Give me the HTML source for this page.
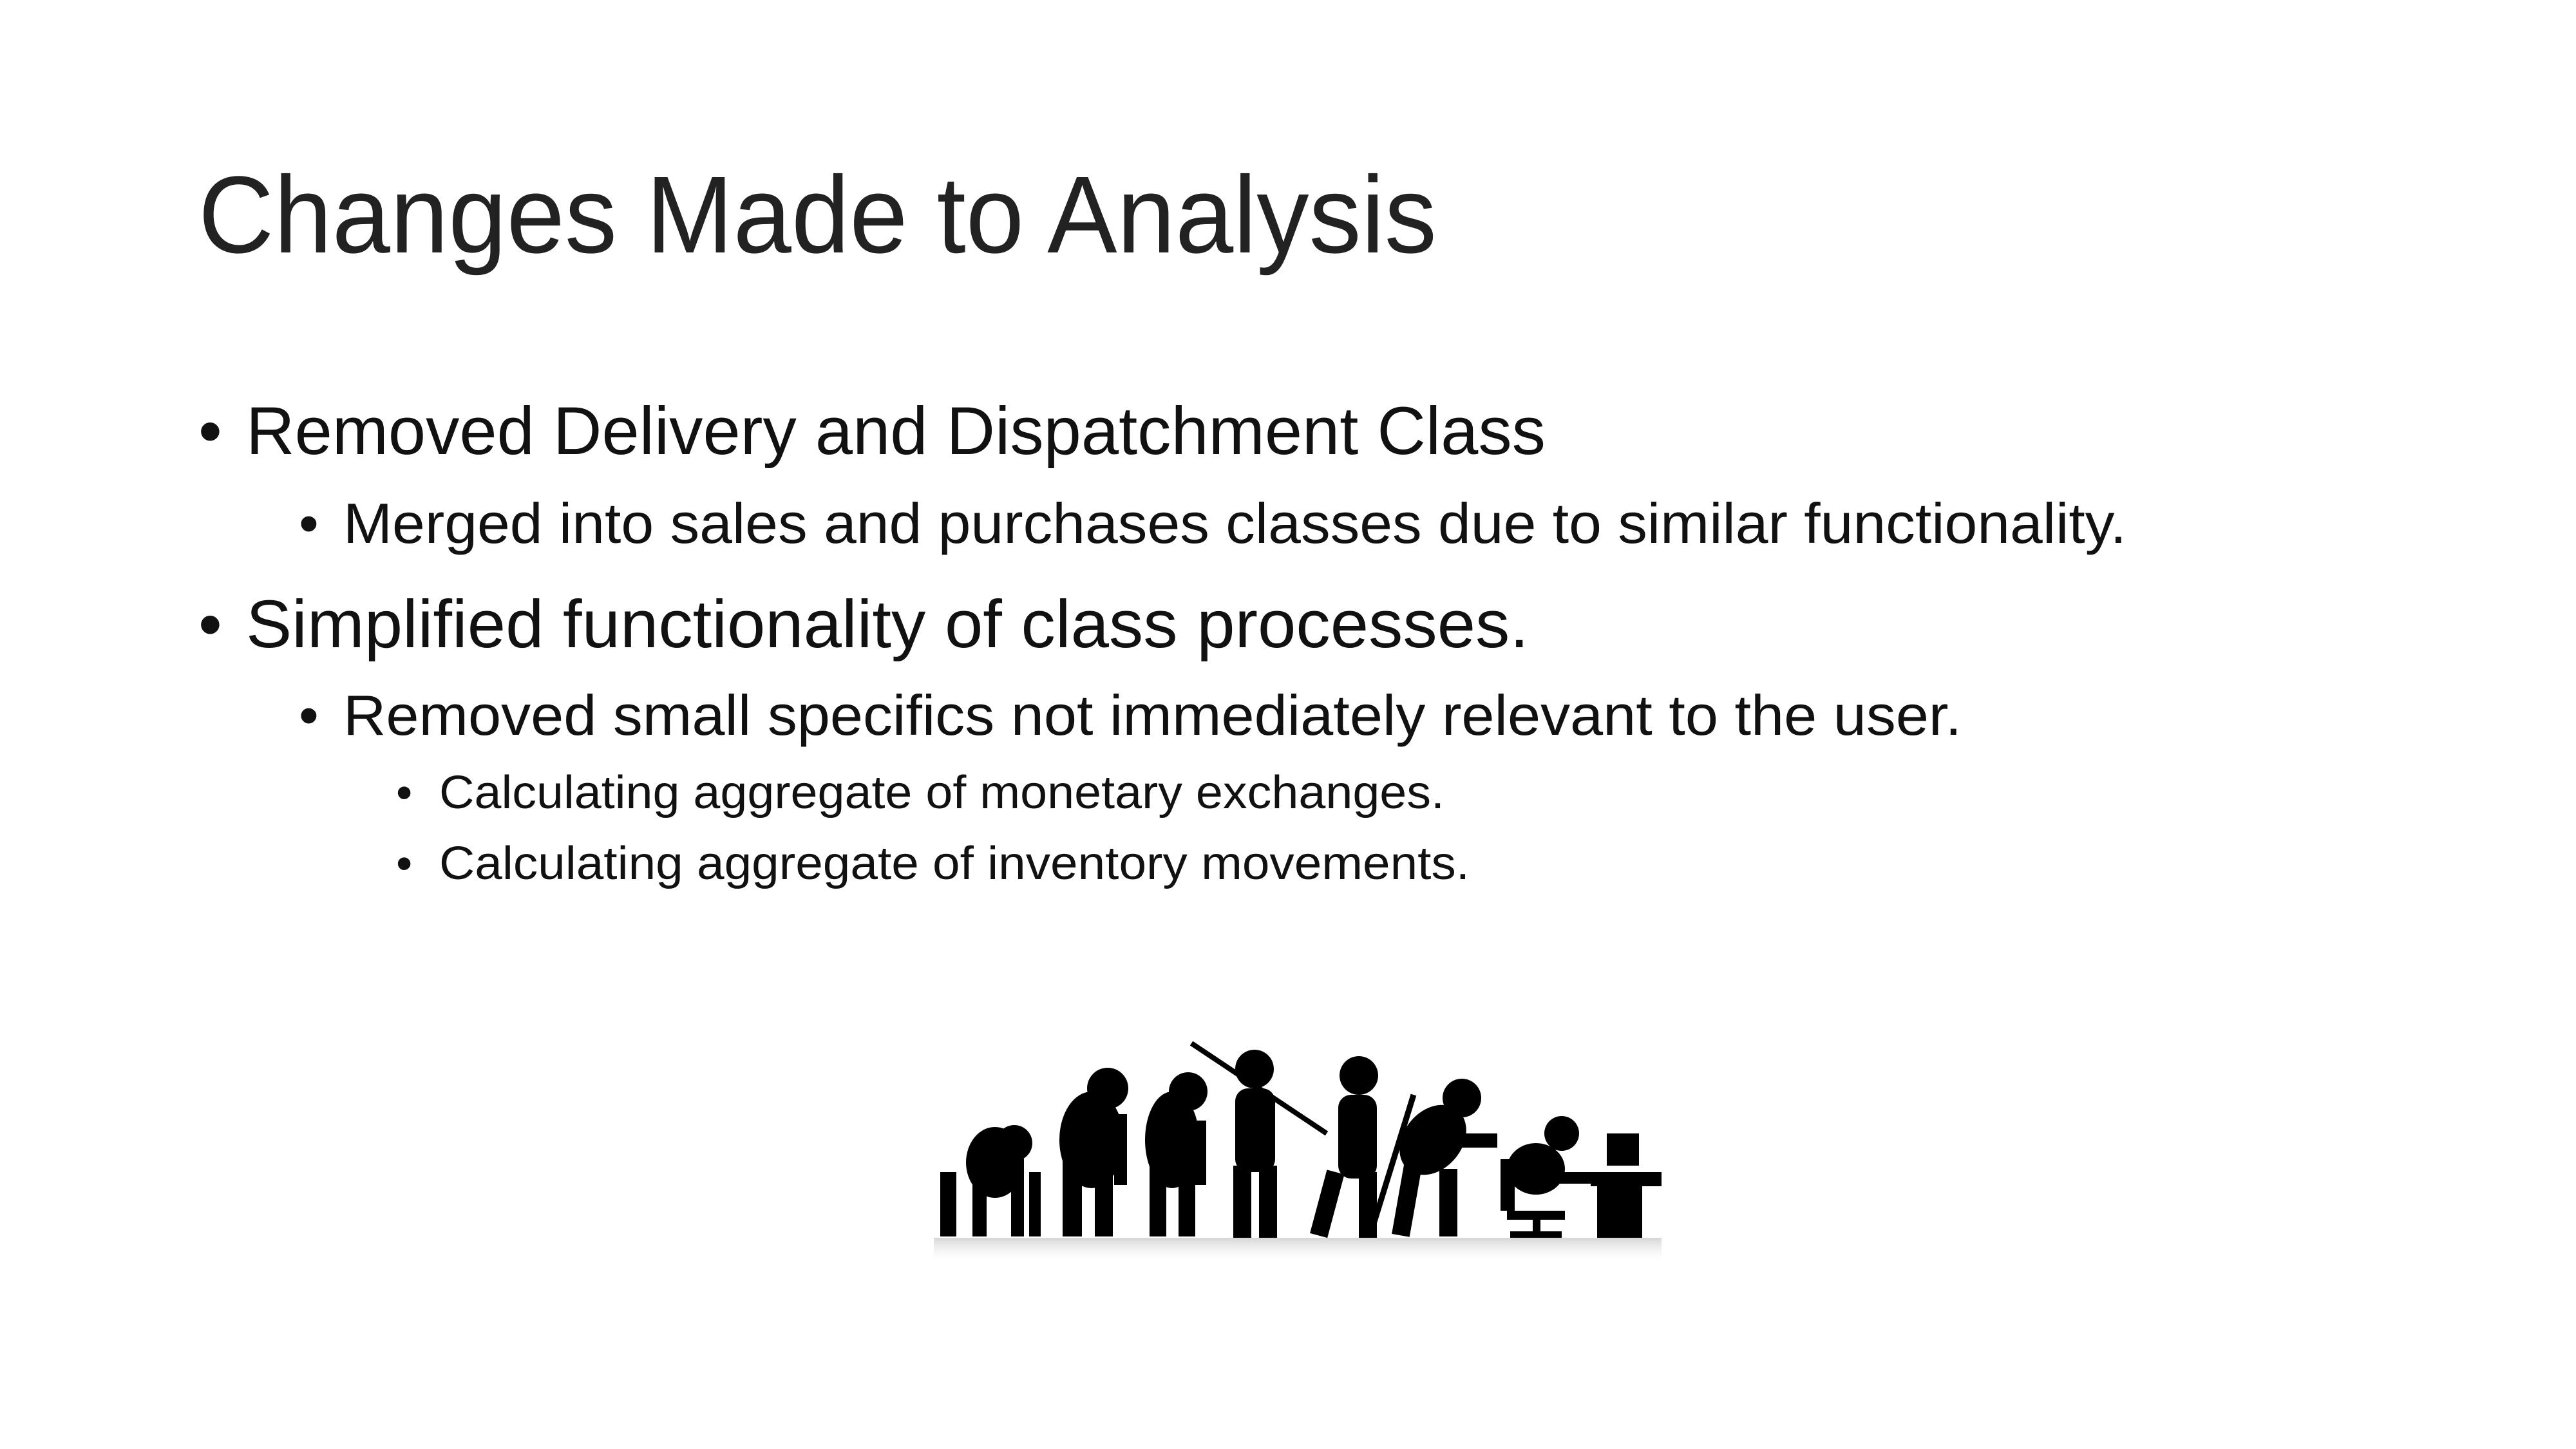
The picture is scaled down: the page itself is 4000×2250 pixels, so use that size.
<!DOCTYPE html>
<html><head><meta charset="utf-8"><style>
html,body{margin:0;padding:0;background:#fff;width:4000px;height:2250px;overflow:hidden}
svg{display:block}
text{font-family:"Liberation Sans",sans-serif;fill:#111}
</style></head><body>
<svg width="4000" height="2250" viewBox="0 0 4000 2250" xmlns="http://www.w3.org/2000/svg">
<defs>
<linearGradient id="fade" x1="0" y1="0" x2="0" y2="1">
<stop offset="0" stop-color="#aaa" stop-opacity="0.5"/><stop offset="1" stop-color="#fff" stop-opacity="0"/>
</linearGradient>
</defs>
<text x="308" y="392" font-size="170" textLength="1923" lengthAdjust="spacingAndGlyphs" style="fill:#222">Changes Made to Analysis</text>

<text x="308" y="705" font-size="105">•</text>
<text x="382" y="705" font-size="105" textLength="2018" lengthAdjust="spacingAndGlyphs">Removed Delivery and Dispatchment Class</text>
<text x="464" y="843" font-size="88">•</text>
<text x="533" y="843" font-size="88" textLength="2769" lengthAdjust="spacingAndGlyphs">Merged into sales and purchases classes due to similar functionality.</text>

<text x="308" y="1005" font-size="105">•</text>
<text x="382" y="1005" font-size="105" textLength="1992" lengthAdjust="spacingAndGlyphs">Simplified functionality of class processes.</text>
<text x="464" y="1141" font-size="88">•</text>
<text x="533" y="1141" font-size="88" textLength="2513" lengthAdjust="spacingAndGlyphs">Removed small specifics not immediately relevant to the user.</text>
<text x="615" y="1255" font-size="72">•</text>
<text x="682" y="1255" font-size="72" textLength="1561" lengthAdjust="spacingAndGlyphs">Calculating aggregate of monetary exchanges.</text>
<text x="615" y="1365" font-size="72">•</text>
<text x="682" y="1365" font-size="72" textLength="1600" lengthAdjust="spacingAndGlyphs">Calculating aggregate of inventory movements.</text>

<rect x="1450" y="1922" width="1130" height="40" fill="url(#fade)"/>
<g fill="#000">
<ellipse cx="1545" cy="1805" rx="45" ry="55"/>
<circle cx="1575" cy="1775" r="28"/>
<rect x="1460" y="1820" width="25" height="100"/>
<rect x="1510" y="1830" width="22" height="90"/>
<rect x="1570" y="1800" width="20" height="120"/>
<rect x="1598" y="1820" width="18" height="100"/>
<circle cx="1720" cy="1690" r="32"/>
<ellipse cx="1695" cy="1770" rx="50" ry="75"/>
<rect x="1650" y="1800" width="30" height="120"/>
<rect x="1700" y="1810" width="28" height="110"/>
<rect x="1730" y="1730" width="20" height="110"/>
<circle cx="1845" cy="1695" r="30"/>
<ellipse cx="1820" cy="1770" rx="42" ry="75"/>
<rect x="1785" y="1810" width="26" height="110"/>
<rect x="1830" y="1810" width="26" height="110"/>
<rect x="1855" y="1740" width="18" height="100"/>
<circle cx="1948" cy="1660" r="30"/>
<rect x="1918" y="1690" width="62" height="130" rx="20"/>
<rect x="1915" y="1810" width="28" height="112"/>
<rect x="1955" y="1810" width="28" height="112"/>
<line x1="1850" y1="1620" x2="2060" y2="1760" stroke="#000" stroke-width="8"/>
<circle cx="2110" cy="1670" r="30"/>
<rect x="2078" y="1700" width="60" height="130" rx="20"/>
<rect x="2060" y="1820" width="28" height="102" transform="rotate(15 2074 1820)"/>
<rect x="2110" y="1820" width="28" height="102"/>
<line x1="2195" y1="1700" x2="2130" y2="1910" stroke="#000" stroke-width="9"/>
<circle cx="2270" cy="1705" r="30"/>
<ellipse cx="2225" cy="1770" rx="45" ry="60" transform="rotate(40 2225 1770)"/>
<rect x="2180" y="1810" width="28" height="110" transform="rotate(10 2194 1810)"/>
<rect x="2235" y="1815" width="28" height="105"/>
<rect x="2270" y="1760" width="55" height="22"/>
<circle cx="2425" cy="1760" r="27"/>
<ellipse cx="2385" cy="1815" rx="45" ry="40"/>
<rect x="2330" y="1800" width="22" height="80"/>
<rect x="2340" y="1880" width="90" height="14"/>
<rect x="2380" y="1890" width="12" height="30"/>
<rect x="2345" y="1912" width="80" height="10"/>
<rect x="2420" y="1820" width="80" height="18"/>
<rect x="2495" y="1760" width="50" height="50"/>
<rect x="2470" y="1820" width="110" height="22"/>
<rect x="2480" y="1840" width="70" height="82"/>
</g>
</svg>
</body></html>
